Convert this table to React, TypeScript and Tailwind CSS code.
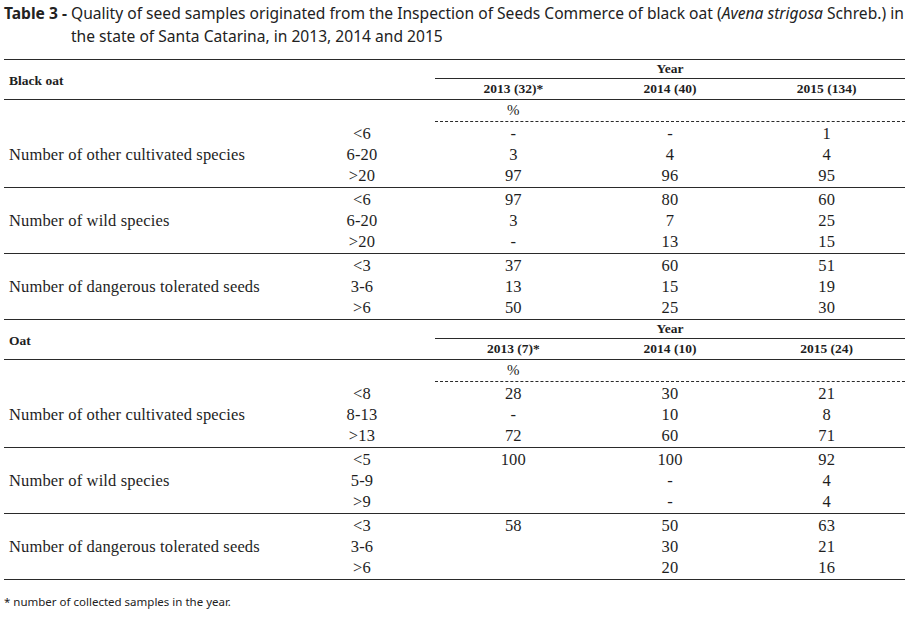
import React from "react";

type Row = [string, string, string, string];
type Group = { label: string; rows: Row[] };

const blackOat: Group[] = [
  {
    label: "Number of other cultivated species",
    rows: [
      ["<6", "-", "-", "1"],
      ["6-20", "3", "4", "4"],
      [">20", "97", "96", "95"],
    ],
  },
  {
    label: "Number of wild species",
    rows: [
      ["<6", "97", "80", "60"],
      ["6-20", "3", "7", "25"],
      [">20", "-", "13", "15"],
    ],
  },
  {
    label: "Number of dangerous tolerated seeds",
    rows: [
      ["<3", "37", "60", "51"],
      ["3-6", "13", "15", "19"],
      [">6", "50", "25", "30"],
    ],
  },
];

const oat: Group[] = [
  {
    label: "Number of other cultivated species",
    rows: [
      ["<8", "28", "30", "21"],
      ["8-13", "-", "10", "8"],
      [">13", "72", "60", "71"],
    ],
  },
  {
    label: "Number of wild species",
    rows: [
      ["<5", "100", "100", "92"],
      ["5-9", "", "-", "4"],
      [">9", "", "-", "4"],
    ],
  },
  {
    label: "Number of dangerous tolerated seeds",
    rows: [
      ["<3", "58", "50", "63"],
      ["3-6", "", "30", "21"],
      [">6", "", "20", "16"],
    ],
  },
];

function Section({
  title,
  years,
  groups,
}: {
  title: string;
  years: [string, string, string];
  groups: Group[];
}) {
  return (
    <div>
      <div className="flex border-b border-[#2a2a2a]">
        <div className="w-[431px] flex items-center pl-[5px] pt-[2px] text-[13.5px] font-bold">
          {title}
        </div>
        <div className="w-[470px]">
          <div className="h-[19px] flex items-center justify-center border-b border-[#2a2a2a] text-[13.5px] font-bold">
            Year
          </div>
          <div className="h-[20px] grid grid-cols-3 items-center text-center text-[13.5px] font-bold">
            {years.map((y) => (
              <div key={y}>{y}</div>
            ))}
          </div>
        </div>
      </div>
      <div className="flex">
        <div className="w-[431px]" />
        <div className="w-[470px] h-[22px] grid grid-cols-3 items-center text-center border-b border-dashed border-[#2a2a2a] text-[15px]">
          <div>%</div>
          <div />
          <div />
        </div>
      </div>
      {groups.map((g) => (
        <div
          key={g.label}
          className="h-[66px] border-b border-[#2a2a2a] grid grid-cols-[316px_84px_31px_repeat(3,1fr)] grid-rows-3 items-center text-[16.5px] tracking-[0.15px] pt-[2px]"
        >
          <div className="row-span-3 col-start-1 row-start-1 pl-[5px] self-center">
            {g.label}
          </div>
          {g.rows.map((r, i) => (
            <React.Fragment key={i}>
              <div
                className="col-start-2 text-center"
                style={{ gridRowStart: i + 1 }}
              >
                {r[0]}
              </div>
              <div
                className="col-start-4 text-center"
                style={{ gridRowStart: i + 1 }}
              >
                {r[1]}
              </div>
              <div
                className="col-start-5 text-center"
                style={{ gridRowStart: i + 1 }}
              >
                {r[2]}
              </div>
              <div
                className="col-start-6 text-center"
                style={{ gridRowStart: i + 1 }}
              >
                {r[3]}
              </div>
            </React.Fragment>
          ))}
        </div>
      ))}
    </div>
  );
}

export default function App() {
  return (
    <div className="w-[917px] h-[617px] bg-white text-[#1e1e1e] overflow-hidden">
      <div className="flex pl-[4px] pt-[2px] font-['Noto_Sans',sans-serif] text-[15.6px] leading-[23px] text-[#222]">
        <span className="font-bold whitespace-pre">Table 3 - </span>
        <span>
          Quality of seed samples originated from the Inspection of Seeds
          Commerce of black oat (<i>Avena strigosa</i> Schreb.) in
          <br />
          the state of Santa Catarina, in 2013, 2014 and 2015
        </span>
      </div>
      <div className="ml-[4px] w-[901px] mt-[11px] border-t border-[#2a2a2a] font-['Liberation_Serif',serif] leading-none">
        <Section
          title="Black oat"
          years={["2013 (32)*", "2014 (40)", "2015 (134)"]}
          groups={blackOat}
        />
        <Section
          title="Oat"
          years={["2013 (7)*", "2014 (10)", "2015 (24)"]}
          groups={oat}
        />
      </div>
      <div className="pl-[4px] mt-[15px] font-['Noto_Sans',sans-serif] text-[11.5px] leading-[14px] text-[#222]">
        * number of collected samples in the year.
      </div>
    </div>
  );
}
